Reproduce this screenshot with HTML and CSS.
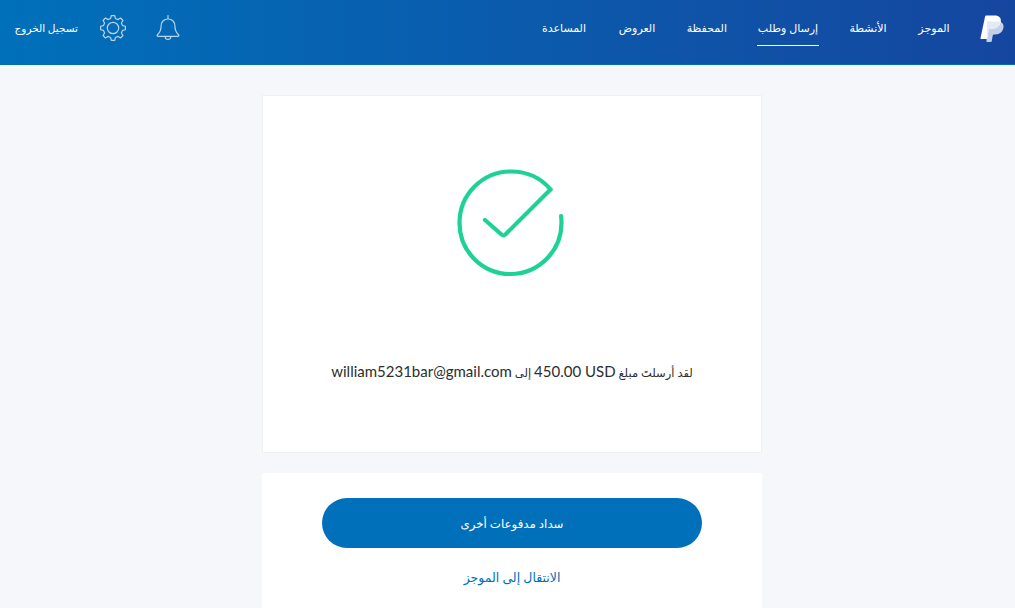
FILE: index.html
```html
<!DOCTYPE html>
<html lang="ar" dir="rtl">
<head>
<meta charset="utf-8">
<title>PayPal</title>
<link rel="stylesheet" href="styles.css">
</head>
<body>
<header class="topbar">
  <svg class="logo" viewBox="0 0 24 28" width="24" height="28" aria-hidden="true">
    <path class="logo-back" d="M7 6.500h10.500c3.900 0 6.500 2 6 5.800-.6 4.500-3.700 7.200-8.200 7.200h-1.500c-.6 0-1 .400-1.100 1l-.9 5.500c-.1.600-.5 1-1.100 1H7.400c-.7 0-1-.4-.9-1z"/>
    <path class="logo-front" d="M6.300.500h8.600c4 0 6.600 2.300 5.900 6.300-.8 4.300-4 7-8.400 7H9.700c-.6 0-1 .400-1.100 1l-1.200 8.300c-.1.600-.5 1-1.100 1H1.500c-.7 0-1.100-.5-1-1.200L5.100 1.500c.1-.6.600-1 1.200-1z"/>
    <path class="logo-overlap" d="M7 6.500h13.600c-.9 4.500-4.100 7.300-8.200 7.300H9.700c-.6 0-1 .400-1.100 1l-1.200 8.300c-.1.500-.4.900-.9 1z"/>
  </svg>
  <nav class="nav">
    <a class="nav-item" href="#">الموجز</a>
    <a class="nav-item" href="#">الأنشطة</a>
    <a class="nav-item active" href="#">إرسال وطلب</a>
    <a class="nav-item" href="#">المحفظة</a>
    <a class="nav-item" href="#">العروض</a>
    <a class="nav-item" href="#">المساعدة</a>
  </nav>
  <div class="tools">
    <svg class="bell" viewBox="0 0 24 26" width="24" height="26" aria-hidden="true">
      <path d="M12 .500v3.500M12 4c-4.300 0-6.900 3-6.900 7 0 4.300-1.300 6.500-3.600 8.700-.7.700-.3 1.600.6 1.600h19.800c.9 0 1.300-.9.600-1.600-2.300-2.200-3.600-4.400-3.600-8.700 0-4-2.600-7-6.900-7zM9 21.500c.3 2 1.500 3 3 3s2.700-1 3-3"/>
    </svg>
    <svg class="gear" viewBox="0 0 26 26" width="26" height="26" aria-hidden="true">
      <circle cx="13" cy="13" r="5.700"/>
      <path d="M10.630 3.490L11.260.62H14.740L15.370 3.490L18.050 4.600L20.520 3.020L22.980 5.480L21.400 7.950L22.510 10.630L25.380 11.260V14.740L22.510 15.370L21.400 18.050L22.980 20.520L20.520 22.980L18.050 21.400L15.370 22.510L14.740 25.380H11.260L10.630 22.510L7.950 21.400L5.480 22.980L3.020 20.520L4.600 18.050L3.490 15.370L.62 14.740V11.260L3.490 10.630L4.600 7.950L3.020 5.480L5.480 3.020L7.950 4.600Z"/>
    </svg>
    <a class="logout" href="#">تسجيل الخروج</a>
  </div>
</header>
<main class="page">
  <section class="card result">
    <svg class="check" viewBox="0 0 108 108" width="108" height="108" aria-hidden="true">
      <path d="M93.500 20.500C84 9 70.500 2.500 54 2.500 25.500 2.500 2.500 25.500 2.500 54s23 51 51 51 51-23 51-51c0-2.500-.1-4.500-.4-7"/>
      <path d="M28 51l16.500 14.500c1.300 1.100 2.700 1.100 3.900 0L93.500 20.500"/>
    </svg>
    <p class="message">لقد أرسلتَ مبلغ <bdi class="latin">450.00 USD</bdi> إلى <bdi class="latin">william5231bar@gmail.com</bdi></p>
  </section>
  <section class="card actions">
    <a class="primary" href="#">سداد مدفوعات أخرى</a>
    <a class="link" href="#">الانتقال إلى الموجز</a>
  </section>
</main>
</body>
</html>
```
FILE: styles.css
```css
* { box-sizing: border-box; }
html, body { margin: 0; height: 100%; overflow: hidden; }
body {
  background: #f5f7fa;
  font-family: "Lato", "Liberation Serif", "DejaVu Sans", sans-serif;
  color: #2c2e2f;
}
a { text-decoration: none; }
.topbar {
  height: 65px;
  display: flex;
  align-items: flex-start;
  padding: 0 11px 0 15px;
  background: linear-gradient(to left, #15469f 0%, #0070ba 100%);
  border-bottom: 1px solid #0070ba;
}
.logo { margin-top: 15px; flex: none; }
.logo-front { fill: #fff; }
.logo-back { fill: #c3d1e8; }
.logo-overlap { fill: #e3e9f5; }
.nav {
  display: grid;
  grid-template-columns: 34px 38px 62px 39px 42px 42px;
  column-gap: 30px;
  margin-right: 29px;
}
.nav-item {
  display: block;
  height: 46px;
  padding-top: 19px;
  color: #fff;
  font-size: 11px;
  line-height: 17px;
  text-align: center;
  white-space: nowrap;
}
.nav-item.active { border-bottom: 1px solid #fff; }
.tools {
  margin-right: auto;
  display: flex;
  align-items: center;
  height: 56px;
}
.bell, .gear { fill: none; stroke: #b9d3ea; stroke-width: 1.200; stroke-linejoin: round; stroke-linecap: round; flex: none; }
.gear { margin-right: 30px; }
.logout { margin-right: 22px; color: #fff; font-size: 10.500px; width: 63px; white-space: nowrap; }
.page {
  margin: 30px 253px 0 262px;
  display: flex;
  flex-direction: column;
  gap: 20px;
}
.card { background: #fff; }
.result {
  height: 358px;
  border: 1px solid #eef0f2;
  display: flex;
  flex-direction: column;
  align-items: center;
  padding-top: 73px;
}
.check { fill: none; stroke: #1ed296; stroke-width: 4.200; stroke-linecap: round; stroke-linejoin: round; flex: none; margin-right: 3px; }
.message { margin: 83px 0 0; font-size: 11.500px; line-height: 22px; white-space: nowrap; }
.latin { font-family: "Lato", sans-serif; font-size: 15px; }
.actions {
  height: 160px;
  display: flex;
  flex-direction: column;
  align-items: center;
  padding-top: 25px;
}
.primary {
  width: 380px;
  height: 50px;
  border-radius: 25px;
  background: #0070ba;
  color: #fff;
  font-size: 11.800px;
  display: flex;
  align-items: center;
  justify-content: center;
}
.link { margin-top: 19px; font-size: 12.500px; line-height: 22px; color: #0070ba; }
```
